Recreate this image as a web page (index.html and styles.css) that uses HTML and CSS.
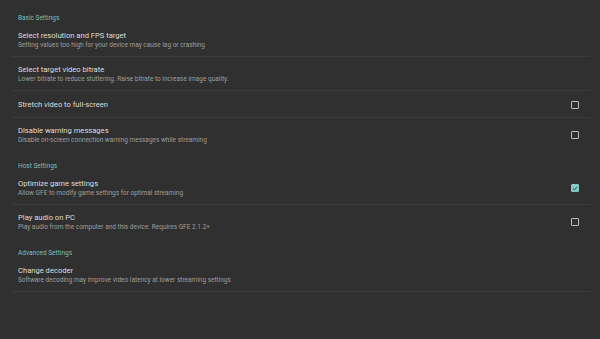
FILE: index.html
```html
<!DOCTYPE html>
<html>
<head>
<meta charset="utf-8">
<link rel="stylesheet" href="styles.css">
</head>
<body>
<div class="page">
  <div class="cat first">Basic Settings</div>
  <div class="row two divided">
    <div class="text">
      <div class="title">Select resolution and FPS target</div>
      <div class="sub">Setting values too high for your device may cause lag or crashing</div>
    </div>
  </div>
  <div class="row two divided">
    <div class="text">
      <div class="title">Select target video bitrate</div>
      <div class="sub">Lower bitrate to reduce stuttering. Raise bitrate to increase image quality.</div>
    </div>
  </div>
  <div class="row one divided">
    <div class="text">
      <div class="title">Stretch video to full-screen</div>
    </div>
    <span class="box"></span>
  </div>
  <div class="row two">
    <div class="text">
      <div class="title">Disable warning messages</div>
      <div class="sub">Disable on-screen connection warning messages while streaming</div>
    </div>
    <span class="box"></span>
  </div>
  <div class="cat">Host Settings</div>
  <div class="row two divided">
    <div class="text">
      <div class="title">Optimize game settings</div>
      <div class="sub">Allow GFE to modify game settings for optimal streaming</div>
    </div>
    <span class="box checked"><svg viewBox="0 0 10 10" width="7" height="7"><path d="M1.8 5.2 L4 7.3 L8.3 2.8" fill="none" stroke="#2b3b3a" stroke-width="1.6"/></svg></span>
  </div>
  <div class="row two">
    <div class="text">
      <div class="title">Play audio on PC</div>
      <div class="sub">Play audio from the computer and this device. Requires GFE 2.1.2+</div>
    </div>
    <span class="box"></span>
  </div>
  <div class="cat">Advanced Settings</div>
  <div class="row two divided">
    <div class="text">
      <div class="title">Change decoder</div>
      <div class="sub">Software decoding may improve video latency at lower streaming settings</div>
    </div>
  </div>
</div>
</body>
</html>
```
FILE: styles.css
```css
html, body {
  margin: 0;
  padding: 0;
  background: #303030;
}
body {
  font-family: Roboto, "Liberation Sans", sans-serif;
  width: 600px;
  height: 339px;
  overflow: hidden;
}
.page {
  padding-top: 3px;
}
.cat {
  color: #7fbfb8;
  font-size: 6.5px;
  line-height: 9px;
  padding: 10px 0 0 18px;
}
.cat.first {
  padding-top: 11px;
}
.row {
  display: flex;
  align-items: center;
  margin: 0 10px 0 12px;
  padding: 0 11px 0 6px;
}
.row.two {
  padding-top: 7px;
  padding-bottom: 7px;
}
.row.one {
  padding-top: 8px;
  padding-bottom: 8px;
}
.row.divided {
  border-bottom: 1px solid #3b3b3b;
  padding-bottom: 6px;
}
.row.one.divided {
  padding-bottom: 7px;
}
.text {
  flex: 1;
}
.title {
  color: #dedede;
  font-size: 7.6px;
  line-height: 11px;
}
.sub {
  color: #9e9e9e;
  font-size: 6.5px;
  line-height: 9px;
}
.box {
  width: 6px;
  height: 6px;
  border: 1.5px solid #bdbdbd;
  border-radius: 1px;
  display: flex;
  align-items: center;
  justify-content: center;
}
.box.checked {
  background: #80cbc4;
  border-color: #80cbc4;
}
```
